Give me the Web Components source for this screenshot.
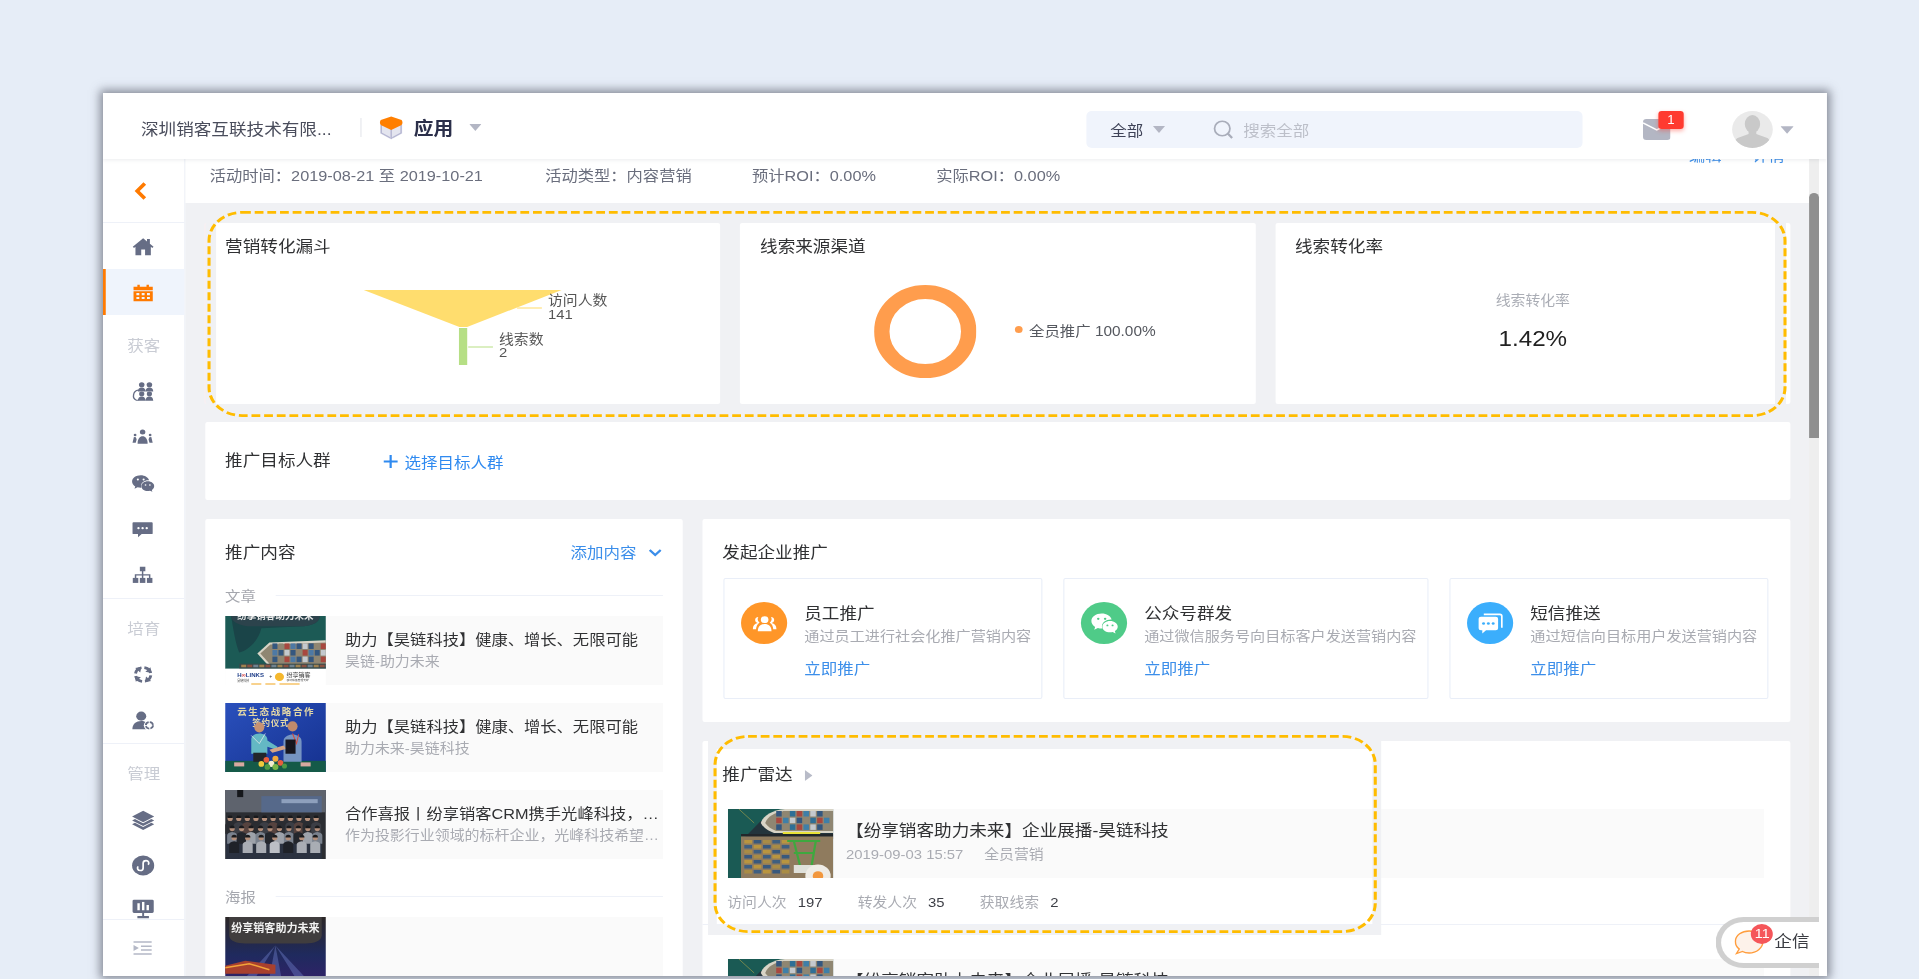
<!DOCTYPE html>
<html lang="zh">
<head>
<meta charset="utf-8">
<title>活动详情</title>
<style>
html, body { margin: 0; height: 979px; overflow: hidden; }
body {
    box-sizing: border-box;
    padding: 93px 0 0 103px;
    background: #e6edf7;
    font: 14px "Liberation Sans", "Noto Sans CJK SC", sans-serif;
    color: #303133;
}
</style>
</head>
<body>

<crm-window>
    <crm-header slot="header"></crm-header>
    <side-nav slot="nav"></side-nav>

    <sub-bar slot="main"></sub-bar>
    <div slot="main" style="flex:1;min-height:0;overflow:hidden;padding:20px 17px 0 18px;">
        <chart-row></chart-row>
        <target-card></target-card>
        <div style="display:grid;grid-template-columns:434px 989px;gap:18px;align-items:start;">
            <content-card></content-card>
            <div style="display:flex;flex-direction:column;gap:19px;">
                <launch-card></launch-card>
                <radar-card></radar-card>
            </div>
        </div>
    </div>

    <chat-widget slot="float"></chat-widget>
</crm-window>

<script>
const CYCLE_HEADS = [45, 135, 225, 315]
    .map((a) => `<path d="M11.500 .8l5.500 3.700-5.500 3.700z" transform="rotate(${a} 12 12)"/>`).join("");

const ICONS = {
    home: `<path d="M12 2.500 1.200 12.300l1.300 1.400L4 12.400V22h6v-6.500h4V22h6v-9.600l1.500 1.300 1.300-1.400L19 8.900V3.500h-3v2.700z"/>`,
    calendar: `<path d="M2 5.500h4V3h2.500v2.500h7V3H18v2.500h4V9.500H2z"/><path fill-rule="evenodd" d="M2 10.500h20V22H2zM5 12.500V15h3v-2.500zM10.500 12.500V15h3v-2.500zM16 12.500V15h3v-2.500zM5 17v2.500h3V17zM10.500 17v2.500h3V17zM16 17v2.500h3V17z"/>`,
    group: `<circle cx="10.500" cy="4.300" r="2.900"/><circle cx="18.500" cy="4.300" r="2.900"/><path d="M6.500 12c0-3 1.700-4.500 4-4.500s4 1.500 4 4.500zM14.500 12c0-3 1.700-4.500 4-4.500s4 1.500 4 4.500z"/><circle cx="10.500" cy="14.800" r="2.700"/><circle cx="18.500" cy="14.800" r="2.700"/><path d="M6.500 22.500c0-3 1.700-4.800 4-4.800s4 1.800 4 4.800zM14.500 22.500c0-3 1.700-4.800 4-4.800s4 1.800 4 4.800z"/><path d="M7 10.500C1.500 11 0 20 5 22h2" fill="none" stroke="currentColor" stroke-width="1.400"/>`,
    team: `<circle cx="12" cy="6" r="3"/><path d="M6.500 20c0-6 2.500-9 5.500-9s5.500 3 5.500 9z"/><circle cx="3.800" cy="9.500" r="1.500"/><circle cx="20.200" cy="9.500" r="1.500"/><path d="M1 19l1.500-7 2.200.3.800 2.700-1 4zM23 19l-1.500-7-2.200.3-.8 2.700 1 4z"/>`,
    wechat: `<path d="M9.500 2.500c-5 0-9 3.200-9 7.200 0 2.300 1.300 4.300 3.300 5.600L3 18l3.200-1.600c1 .3 2.100.5 3.300.5h.6c-.3-.7-.4-1.400-.4-2.100 0-3.700 3.500-6.600 7.800-6.600h.7C17.300 5 13.800 2.500 9.500 2.500z"/><path d="M23.500 15c0-3-3-5.500-6.700-5.500S10.100 12 10.100 15s3 5.500 6.700 5.500c.8 0 1.600-.1 2.300-.3l2.500 1.300-.6-2.200c1.500-1 2.500-2.600 2.500-4.300z"/><circle cx="6.500" cy="7.500" r="1.100" style="fill:var(--hole,#fff)"/><circle cx="12.500" cy="7.500" r="1.100" style="fill:var(--hole,#fff)"/><circle cx="14.500" cy="13.800" r=".9" style="fill:var(--hole,#fff)"/><circle cx="19" cy="13.800" r=".9" style="fill:var(--hole,#fff)"/>`,
    chat: `<path d="M2 4h20a1 1 0 0 1 1 1v12a1 1 0 0 1-1 1H11l-4 4v-4H2a1 1 0 0 1-1-1V5a1 1 0 0 1 1-1z"/><circle cx="7.500" cy="11" r="1.300" fill="#fff"/><circle cx="12" cy="11" r="1.300" fill="#fff"/><circle cx="16.500" cy="11" r="1.300" fill="#fff"/>`,
    org: `<path d="M9 2h6v5.500H9zM11.200 7h1.600v4h7.700v4.500h-1.600v-2.900h-6.100v2.900h-1.600v-2.900H5.100v2.900H3.500V11h7.700z"/><rect x="1.300" y="15.500" width="6" height="6"/><rect x="9" y="15.500" width="6" height="6"/><rect x="16.700" y="15.500" width="6" height="6"/>`,
    cycle: `<circle cx="12" cy="12" r="8" fill="none" stroke="currentColor" stroke-width="3" stroke-dasharray="9.400 3.170" stroke-dashoffset="-1.050"/>${CYCLE_HEADS}`,
    usercycle: `<circle cx="10" cy="7" r="5.200"/><path d="M.8 22c0-6 4-9.300 9.200-9.300 2 0 3.500.5 4.800 1.300V22z"/><circle cx="18.500" cy="17.500" r="5.800" fill="#fff"/><circle cx="18.500" cy="17.500" r="3.700" fill="none" stroke="currentColor" stroke-width="1.900" stroke-dasharray="4.600 1.200"/>`,
    layers: `<path d="M12 2 23.500 8.500 12 15 .5 8.500z"/><path d="M.5 13l3-1.700L12 16.200l8.500-4.900 3 1.700L12 19.500z"/><path d="M.5 17.500l3-1.700 8.500 4.900 8.500-4.900 3 1.700L12 24z"/>`,
    miniapp: `<circle cx="12" cy="12" r="11.500"/><path d="M6.800 13c-1.400 2-.5 4.800 2.200 4.800 2 0 3-1.500 3-3v-5.400c0-1.500 1-3 3-3 2.700 0 3.600 2.800 2.200 4.800" fill="none" stroke="#fff" stroke-width="1.800"/>`,
    monitor: `<path d="M2.500 2h19A1.500 1.500 0 0 1 23 3.500v12a1.500 1.500 0 0 1-1.500 1.500h-19A1.500 1.500 0 0 1 1 15.500v-12A1.500 1.500 0 0 1 2.500 2z"/><path d="M11 17h2v3.500h5V23H6v-2.500h5z"/><g fill="#fff"><rect x="6" y="6" width="2.500" height="8"/><rect x="10.800" y="4.500" width="2.500" height="9.500"/><rect x="15.500" y="8" width="2.500" height="6"/></g>`,
    indent: `<path d="M1 3h22v2H1zM10 8.500h13v2H10zM10 13.500h13v2H10zM1 19h22v2H1zM1 8l6.500 4L1 16z"/>`,
    users: `<circle cx="12" cy="8" r="3.600"/><path d="M5.500 20c0-5 2.700-7.500 6.500-7.500s6.500 2.500 6.500 7.500z"/><path d="M6 5.200a3.200 3.200 0 0 0-.6 6.300C2.500 12.300.8 14.300.8 18h3c.2-3 1.400-5.600 3.400-6.800A5 5 0 0 1 6 5.200zM18 5.200a3.200 3.200 0 0 1 .6 6.300c2.900.8 4.600 2.800 4.600 6.500h-3c-.2-3-1.400-5.600-3.400-6.800A5 5 0 0 0 18 5.200z"/>`,
    sms: `<path d="M6 2.500h14A2.500 2.500 0 0 1 22.500 5v11H21V5a1 1 0 0 0-1-1H6z"/><path d="M3.500 5.500h13A2 2 0 0 1 18.500 7.500v9a2 2 0 0 1-2 2H8l-3.300 3v-3H3.500a2 2 0 0 1-2-2v-9a2 2 0 0 1 2-2z"/><g style="fill:var(--hole,#fff)"><circle cx="5.800" cy="12" r="1.300"/><circle cx="10" cy="12" r="1.300"/><circle cx="14.200" cy="12" r="1.300"/></g>`
};

class UiIcon extends HTMLElement {
    connectedCallback() {
        const size = this.getAttribute("size") || 20;
        const name = this.getAttribute("name");
        this.attachShadow({ mode: "open" }).innerHTML = `
<style>:host { display: inline-flex; line-height: 0; } svg { fill: currentColor; }</style>
<svg width="${size}" height="${size}" viewBox="0 0 24 24">${ICONS[name]}</svg>`;
    }
}

function caret(color = "#b3b6c4", w = 11, h = 7) {
    return `<svg width="${w}" height="${h}" viewBox="0 0 11 7"><path d="M0 0h11L5.500 7z" fill="${color}"/></svg>`;
}

class CrmWindow extends HTMLElement {
    constructor() {
        super();
        this.attachShadow({ mode: "open" }).innerHTML = `
<style>
:host {
    display: block;
    width: 1724px;
    height: 883px;
    background: #fff;
    box-shadow: 0 0 9px 3px rgba(74, 78, 92, .62);
}
.stretch {
    position: relative;
    width: 1567.3px;
    height: 883px;
    overflow: hidden;
    display: flex;
    flex-direction: column;
    background: #fff;
    transform: scaleX(1.1);
    transform-origin: 0 0;
    filter: blur(.3px);
}
.body { flex: 1; min-height: 0; display: flex; }
.main { flex: 1; min-width: 0; display: flex; flex-direction: column; background: #f0f1f4; }
.rail { width: 9px; background: #eeeeee; flex: none; margin-right: 7.300px; position: relative; }
.thumb { width: 9px; height: 245px; margin-top: 34px; background: #8f8f8f; border-radius: 5px 5px 0 0; }
</style>
<div class="stretch">
    <slot name="header"></slot>
    <div class="body">
        <slot name="nav"></slot>
        <div class="main"><slot name="main"></slot></div>
        <div class="rail"><div class="thumb"></div></div>
    </div>
    <slot name="float"></slot>
</div>`;
    }
}

class CrmHeader extends HTMLElement {
    constructor() {
        super();
        this.attachShadow({ mode: "open" }).innerHTML = `
<style>
:host {
    display: flex;
    align-items: center;
    flex: none;
    height: 66px;
    box-sizing: border-box;
    padding-left: 34.500px;
    background: #fff;
    position: relative;
    z-index: 3;
    box-shadow: 0 1px 4px rgba(30, 40, 70, .09);
}
.company { width: 175px; font-size: 16px; color: #4a4d5c; white-space: nowrap; margin-top: 3px; }
.sep { width: 1px; height: 19px; background: #e4e6ec; margin: 3px 16px 0 24px; }
.box { margin-top: 3px; display: flex; }
.app { font-size: 18px; font-weight: bold; color: #2b2f4a; margin: 2px 14px 0 10px; }
.drop { display: flex; margin-top: 3px; }
.search { margin-left: 550.700px; margin-top: 7px; width: 451px; height: 37px; border-radius: 5px; background: #f0f4fc;
    display: flex; align-items: center; padding-left: 21.500px; box-sizing: border-box; }
.scope { font-size: 15px; color: #3f4358; margin-right: 8px; }
.glass { margin: 0 9px 0 43px; display: flex; }
.hint { font-size: 15px; color: #bcbfc9; }
.mail { position: relative; margin-left: 54.600px; width: 25px; height: 21px; margin-top: 7px; }
.badge { position: absolute; left: 14px; top: -8px; width: 23px; height: 18px; border-radius: 3px;
    background: #ff3b30; color: #fff; font-size: 12px; text-align: center; line-height: 18px;
    box-shadow: 0 2px 4px rgba(255, 59, 48, .4); }
.avatar { margin-left: 56px; margin-top: 7px; width: 37px; height: 37px; border-radius: 50%; background: #eaeaea; overflow: hidden; }
.tail { margin-left: 7.500px; margin-top: 7px; display: flex; }
</style>
<div class="company">深圳销客互联技术有限...</div>
<div class="sep"></div>
<div class="box"><svg width="22" height="24" viewBox="0 0 22 24">
    <path d="M1 7v10.500l10 6 10-6V7l-10 5z" fill="#e4e5ef"/>
    <path d="M2 9v8l8 4.800M20 9v8l-8 4.800M11 13v10" fill="none" stroke="#b5b6d2" stroke-width="1.300"/>
    <path d="M11 .5 20.500 4c1 1.500 1 3.500 0 5L11 14 1.500 9c-1-1.500-1-3.500 0-5z" fill="#ff7f00"/>
</svg></div>
<div class="app">应用</div>
<div class="drop">${caret()}</div>
<div class="search">
    <span class="scope">全部</span>
    <span style="display:flex">${caret("#b3b6c4", 12, 7)}</span>
    <span class="glass"><svg width="19" height="19" viewBox="0 0 19 19"><ellipse cx="8.500" cy="8.500" rx="7" ry="7.300" fill="none" stroke="#a9adba" stroke-width="1.600"/><path d="M13.500 13.500l4 4.500" stroke="#a9adba" stroke-width="2"/></svg></span>
    <span class="hint">搜索全部</span>
</div>
<div class="mail">
    <svg width="25" height="21" viewBox="0 0 25 21"><rect width="25" height="21" rx="3" fill="#b3b6c3"/><path d="M0 4l12.500 7L18 8" fill="none" stroke="#fff" stroke-width="1.500"/></svg>
    <div class="badge">1</div>
</div>
<div class="avatar"><svg width="37" height="37" viewBox="0 0 37 37"><ellipse cx="18.500" cy="13" rx="7" ry="9" fill="#c9c9c9"/><path d="M15 20v3l-10 4c-2 1-3 4-3 10h33c0-6-1-9-3-10l-10-4v-3z" fill="#c9c9c9"/></svg></div>
<div class="tail">${caret("#b3b6c4", 12, 8)}</div>`;
    }
}

class NavItem extends HTMLElement {
    constructor() {
        super();
        this.attachShadow({ mode: "open" }).innerHTML = `
<style>
:host { display: flex; align-items: center; justify-content: center; height: 46px; flex: none; color: #666d85; padding-right: 1.500px; }
:host([active]) { background: #eff4fc; color: #ff7a00; box-shadow: inset 2.500px 0 0 #ff7a00; }
</style>
<slot></slot>`;
    }
}

class NavLabel extends HTMLElement {
    constructor() {
        super();
        this.attachShadow({ mode: "open" }).innerHTML = `
<style>
:host { display: flex; align-items: center; justify-content: center; box-sizing: border-box; height: 53px;
    padding-top: 5px; flex: none; font-size: 15px; color: #c9ccd4; }
:host([line]) { border-top: 1px solid #eef1f8; }
</style>
<slot></slot>`;
    }
}

class SideNav extends HTMLElement {
    constructor() {
        super();
        this.attachShadow({ mode: "open" }).innerHTML = `
<style>
:host { display: flex; flex-direction: column; flex: none; width: 75px; box-sizing: border-box;
    border-right: 1px solid #e9edf6; background: #fff; height: 817px; }
.back { height: 63px; flex: none; border-bottom: 1px solid #eef1f8; display: flex; align-items: center; justify-content: center; padding-right: 7px; box-sizing: content-box; }
.scroll { flex: 1; min-height: 0; overflow: hidden; display: flex; flex-direction: column; }
.foot { height: 56px; flex: none; border-top: 1px solid #eef1f8; display: flex; align-items: center; justify-content: center; color: #b4b8c6; padding-right: 1.500px; }
</style>
<div class="back"><svg width="12" height="18" viewBox="0 0 12 18"><path d="M10 1.500 3 9l7 7.500" fill="none" stroke="#ff7a00" stroke-width="3.300"/></svg></div>
<div class="scroll">
    <nav-item><ui-icon name="home" size="21"></ui-icon></nav-item>
    <nav-item active><ui-icon name="calendar" size="21"></ui-icon></nav-item>
    <nav-label>获客</nav-label>
    <nav-item><ui-icon name="group" size="21"></ui-icon></nav-item>
    <nav-item><ui-icon name="team" size="20"></ui-icon></nav-item>
    <nav-item><ui-icon name="wechat" size="21"></ui-icon></nav-item>
    <nav-item><ui-icon name="chat" size="20"></ui-icon></nav-item>
    <nav-item><ui-icon name="org" size="20"></ui-icon></nav-item>
    <nav-label line>培育</nav-label>
    <nav-item><ui-icon name="cycle" size="21"></ui-icon></nav-item>
    <nav-item><ui-icon name="usercycle" size="21"></ui-icon></nav-item>
    <nav-label line>管理</nav-label>
    <nav-item><ui-icon name="layers" size="21"></ui-icon></nav-item>
    <nav-item><ui-icon name="miniapp" size="21"></ui-icon></nav-item>
    <nav-item style="margin-top:-3px"><ui-icon name="monitor" size="21"></ui-icon></nav-item>
</div>
<div class="foot"><ui-icon name="indent" size="18"></ui-icon></div>`;
    }
}

class SubBar extends HTMLElement {
    constructor() {
        super();
        this.attachShadow({ mode: "open" }).innerHTML = `
<style>
:host { display: flex; align-items: center; flex: none; height: 44px; box-sizing: border-box; overflow: hidden;
    padding: 0 22px 14px; background: #fff; font-size: 14.800px; color: #6a6e7d; white-space: nowrap; }
.links { margin-left: auto; align-self: flex-start; margin-top: -13px; display: flex; gap: 28px; color: #3d8ee8; line-height: 20px; }
</style>
<span style="width:305px">活动时间：2019-08-21 至 2019-10-21</span>
<span style="width:188px">活动类型：内容营销</span>
<span style="width:167.500px">预计ROI：0.00%</span>
<span>实际ROI：0.00%</span>
<span class="links"><span>编辑</span><span>详情</span></span>`;
    }
}

class DashFrame extends HTMLElement {
    constructor() {
        super();
        this.attachShadow({ mode: "open" }).innerHTML = `
<style>
:host { position: absolute; display: block; pointer-events: none; z-index: 2; }
svg { display: block; width: 100%; height: 100%; overflow: visible; }
rect { x: 1.400px; y: 1.400px; width: calc(100% - 2.800px); height: calc(100% - 2.800px); rx: 30px; ry: 28px;
    fill: none; stroke: #ffbc00; stroke-width: 2.800px; stroke-dasharray: 8 3.500; }
</style>
<svg><rect></rect></svg>`;
    }
}

const CARD_CSS = `
:host { display: block; background: #fff; border-radius: 2px; }
.title { font-size: 16px; line-height: 20px; color: #303133; }
`;

class ChartRow extends HTMLElement {
    constructor() {
        super();
        this.attachShadow({ mode: "open" }).innerHTML = `
<style>
:host { display: grid; grid-template-columns: repeat(3, 1fr); gap: 18px; height: 181px; position: relative; margin-bottom: 18px; }
.title { font-size: 16px; line-height: 20px; color: #303133; position: absolute; left: 18px; top: 14px; }
section { background: #fff; position: relative; border-radius: 2px; }
.funnel { border-left: 10px solid #f0f1f4; box-shadow: -1px 0 0 #f8f0f2; }
.funnel .title { left: 8px; }
.funnel svg { position: absolute; left: 0; top: 52px; }
.donut { display: flex; align-items: center; padding: 35px 0 0 122px; box-sizing: border-box; }
.legend { margin-left: 34.500px; margin-top: -3px; display: flex; align-items: center; gap: 4px; font-size: 14px; color: #55585f; }
.legend i { width: 7px; height: 7px; border-radius: 50%; background: #ff9d4d; margin-right: 2px; }
.sliver { background: #fff; padding-right: 4px; }
.rate { height: 100%; border-right: 10px solid #f0f1f4; box-sizing: border-box; position: relative;
    display: flex; flex-direction: column; align-items: center; padding: 68px 0 0 14px; }
.rate .label { font-size: 13.500px; color: #aaadb5; line-height: 20px; }
.rate .value { font-size: 22px; color: #222; margin-top: 15px; line-height: 26px; }
</style>
<section class="funnel">
    <div class="title">营销转化漏斗</div>
    <svg width="450" height="110" viewBox="0 0 450 110" font-size="13.500" fill="#555">
        <path d="M134 15H314L228 52H221z" fill="#ffdd6e"/>
        <rect x="220.600" y="53" width="7.500" height="37" fill="#b6df85"/>
        <path d="M273.400 33H296" stroke="#ffe79a" stroke-width="1.500"/>
        <path d="M229 72H251.500" stroke="#cfeaad" stroke-width="1.500"/>
        <text x="301.500" y="30.500">访问人数</text><text x="301.500" y="44.500">141</text>
        <text x="257" y="69">线索数</text><text x="257" y="82.500">2</text>
    </svg>
</section>
<section class="donut">
    <div class="title">线索来源渠道</div>
    <svg width="93" height="93" viewBox="0 0 93 93"><circle cx="46.500" cy="46.500" r="39.500" fill="none" stroke="#ff9d4d" stroke-width="14"/></svg>
    <div class="legend"><i></i><span>全员推广 100.00%</span></div>
</section>
<section class="sliver">
    <div class="rate">
        <div class="title">线索转化率</div>
        <div class="label">线索转化率</div>
        <div class="value">1.42%</div>
    </div>
</section>
<dash-frame style="left:2px;right:3.500px;top:-12px;bottom:-13px"></dash-frame>`;
    }
}

class TargetCard extends HTMLElement {
    constructor() {
        super();
        this.attachShadow({ mode: "open" }).innerHTML = `
<style>
${CARD_CSS}
:host { display: flex; align-items: center; height: 78px; padding-left: 18px; margin-bottom: 19px; box-sizing: border-box; }
.add { margin-left: 48px; display: flex; align-items: center; gap: 6px; color: #2f8af0; font-size: 15px; }
</style>
<span class="title">推广目标人群</span>
<span class="add"><svg width="13" height="13" viewBox="0 0 13 13"><path d="M6.500 0v13M0 6.500h13" stroke="#2f8af0" stroke-width="2"/></svg>选择目标人群</span>`;
    }
}

function containers(x0, y0, cols, rows, w, h, gap, palette) {
    let out = "";
    for (let r = 0; r < rows; r++) {
        for (let c = 0; c < cols; c++) {
            const color = palette[(r * 3 + c * 5) % palette.length];
            out += `<rect x="${x0 + c * (w + gap)}" y="${y0 + r * (h + gap)}" width="${w}" height="${h}" fill="${color}"/>`;
        }
    }
    return out;
}

// rows of people from back to front; the front row wears lighter shirts
function crowd() {
    let out = "";
    const rows = [
        [28, 11, ["#2a2c31", "#3c3e45", "#56433f"]],
        [38, 10, ["#79818d", "#23262c", "#9da2aa"]],
        [47, 7, ["#1f2228", "#a9adb4", "#a9adb4", "#bcbfc5"]]
    ];
    rows.forEach(([y, count, shirts], r) => {
        for (let i = 0; i < count; i++) {
            const x = 5 + r * 2 + i * (94 / count);
            const shirt = shirts[i % shirts.length];
            out += `<rect x="${x - 4.500}" y="${y + 14}" width="9" height="${54 - y}" fill="#2b3240"/><path d="M${x - 5} ${y + 15}V${y + 7}q0-3 5-3.500q5 .5 5 3.500V${y + 15}z" fill="${shirt}"/><circle cx="${x}" cy="${y}" r="2.600" fill="#b58f7a"/><path d="M${x - 2.700} ${y - .3}a2.700 2.700 0 0 1 5.400 0z" fill="#191a1d"/>`;
        }
    });
    return out;
}

const THUMBS = {
    port: `
<rect width="100" height="52" fill="#1c5a55"/>
<path d="M6 0H94C94 6 88 9 78 10L36 12C34 22 24 34 14 36 10 26 8 12 6 0z" fill="#1a4448"/>
<path d="M6 0H94C94 6 88 9 78 10H22C14 9 6 6 6 0z" fill="#2c434c"/>
<text x="50" y="3" text-anchor="middle" font-size="9.500" font-weight="bold" fill="#e9e9e9">纷享销客助力未来</text>
<path d="M32 37 44 26 100 24V50H44z" fill="#d8d4c6"/>
<path d="M35 37 45 28 100 26V48H45z" fill="#8f8672"/>
${containers(47, 27, 9, 3, 5, 5.500, 1, ["#34577f", "#c4c9ce", "#34577f", "#4d79a5", "#a8483f", "#8f8672"])}
<rect x="14" y="47" width="86" height="5" fill="#374a4c"/>
${containers(16, 48, 14, 1, 5, 2.500, 1, ["#9f8250", "#70828e", "#8a5140"])}
<rect y="52" width="100" height="16" fill="#fff"/>
<text x="12" y="60" font-size="6" font-weight="bold" fill="#21408a">H<tspan fill="#d33c3c">∞</tspan>LINKS</text>
<text x="12" y="65" font-size="3" fill="#444">昊链科技</text>
<text x="44" y="61" font-size="5" fill="#333">+</text>
<ellipse cx="54" cy="60" rx="4.500" ry="4" fill="#f5b82e"/>
<text x="61" y="60" font-size="6" fill="#333">纷享销客</text>
<text x="61" y="64.500" font-size="2.800" fill="#555">移动销售管理专家</text>
<path d="M26 67h10M40 67h10M54 67h20" stroke="#f2a61e" stroke-width="1"/>`,
    sign: `
<defs><linearGradient id="sg" x1="0" y1="0" x2="1" y2="1"><stop offset="0" stop-color="#2a50bc"/><stop offset="1" stop-color="#15318f"/></linearGradient></defs>
<rect width="100" height="68" fill="url(#sg)"/>
<text x="50" y="12" text-anchor="middle" font-size="9.500" font-weight="bold" fill="#e4d8a6" textLength="76">云生态战略合作</text>
<text x="45" y="23" text-anchor="middle" font-size="8.500" font-weight="bold" fill="#e4d8a6" textLength="36">签约仪式</text>
<rect y="57" width="100" height="11" fill="#155a48"/>
<path d="M26 50V36c0-4 4-6 8-6s8 2 8 6v1l10 6-1 3-9-3v7z" fill="#64b8c4"/>
<rect x="28" y="49" width="13" height="9" fill="#23262c"/>
<circle cx="34" cy="24" r="5" fill="#c79272"/>
<path d="M26 32 34 40 40 30" fill="none" stroke="#eee" stroke-width=".7"/>
<path d="M58 58V38c0-5 5-7 9-7s9 2 9 7v20z" fill="#7594c2"/>
<circle cx="67" cy="23" r="5" fill="#c08a6c"/>
<path d="M67 30 71 40 73 31" fill="none" stroke="#d94a3a" stroke-width="1"/>
<path d="M44 46l14-4 3 3-14 4z" fill="#d5a486"/>
<rect x="60" y="36" width="10" height="14" fill="#16161f"/>
<circle cx="36" cy="60" r="2.800" fill="#f0c93c"/><circle cx="41" cy="56" r="2.800" fill="#e95d3d"/><circle cx="46" cy="60" r="3" fill="#f4ecd0"/><circle cx="50" cy="55" r="3" fill="#f2a93c"/><circle cx="55" cy="59" r="2.800" fill="#e95d3d"/><circle cx="59" cy="62" r="2.500" fill="#4f9a44"/><circle cx="42" cy="63" r="2.800" fill="#4f9a44"/><circle cx="50" cy="63" r="3" fill="#7ab648"/>
<rect x="9" y="58.500" width="10" height="4" fill="#d8a9a0"/><rect x="75" y="58.500" width="10" height="4" fill="#d8a9a0"/>`,
    crowd: `
<rect width="100" height="68" fill="#2b2d32"/>
<rect width="100" height="22" fill="#5e636d"/>
<rect x="36" y="6" width="60" height="16" fill="#56698a"/>
<rect x="12" y="0" width="6" height="7" fill="#15171b"/>
<rect x="56" y="9" width="36" height="4" fill="#8ea0bd"/>
${crowd()}`,
    night: `
<defs><linearGradient id="ng" x1="0" y1="0" x2="0" y2="1"><stop offset="0" stop-color="#2b2626"/><stop offset=".55" stop-color="#1f2a5e"/><stop offset="1" stop-color="#34206a"/></linearGradient></defs>
<rect width="100" height="68" fill="url(#ng)"/>
<path d="M4 0H96V18C96 24 88 26 80 26H20C12 26 4 24 4 18z" fill="#403d3e"/>
<text x="50" y="15" text-anchor="middle" font-size="11" font-weight="bold" fill="#f2f2f2">纷享销客助力未来</text>
<path d="M50 28 20 60H30zM50 28 44 60H56zM50 28 70 60H80z" fill="#6a79c4" opacity=".45"/>
<path d="M0 48 20 43 50 47 50 56H0z" fill="#a8402e"/>
<path d="M0 50 24 46 44 52" fill="none" stroke="#f2a33a" stroke-width="1.500"/>`,
    aerial: `
<rect width="96" height="69" fill="#1a5a54"/>
<path d="M10 0 24 14" stroke="#c4b04a" stroke-width=".5"/>
<path d="M14 30 30 12 96 0V30z" fill="#23343c"/>
<path d="M30 14C32 7 40 1 52 0H96V24H42C36 22 32 18 30 14z" fill="#d8d4c6"/>
<path d="M34 14C36 8 42 3 52 2H96V22H44C39 20 36 17 34 14z" fill="#8f8672"/>
${containers(44, 2, 8, 3, 5, 5.500, 1.200, ["#34577f", "#c4c9ce", "#3f7fa8", "#a8483f", "#2f6f96", "#8f8672"])}
<rect x="12" y="25" width="84" height="2.500" fill="#22272b"/>
<path d="M12 27.500H96V69H12z" fill="#8f7b5e"/>
${containers(15, 31, 5, 7, 7, 3.500, 1.500, ["#b9953f", "#39597d", "#a98c45", "#3f5f80"])}
<path d="M50 24H84" stroke="#e8e038" stroke-width="2"/>
<path d="M54 32H84M60 32 66 58M80 32 76 58M60 44H78" stroke="#3fa83f" stroke-width="2" fill="none"/>
<rect x="60" y="56" width="22" height="8" fill="#dfe0da"/>
<circle cx="82" cy="67" r="11.500" fill="#efece6"/>
<circle cx="82" cy="67" r="4.800" fill="#f2973d"/>`
};

class ArtThumb extends HTMLElement {
    constructor() { super(); this.attachShadow({ mode: "open" }); }
    connectedCallback() {
        const w = this.getAttribute("width") || 91.500;
        const vb = this.getAttribute("kind") === "aerial" ? "0 0 96 69" : "0 0 100 68";
        this.shadowRoot.innerHTML = `
<style>:host { display: block; flex: none; line-height: 0; width: ${w}px; height: 69px; overflow: hidden; }</style>
<svg width="${w}" height="69" viewBox="${vb}" preserveAspectRatio="none">${THUMBS[this.getAttribute("kind")]}</svg>`;
    }
}

class ContentItem extends HTMLElement {
    constructor() {
        super();
        this.attachShadow({ mode: "open" }).innerHTML = `
<style>
:host { display: flex; height: 69px; margin-bottom: 18px; background: #fafafa; }
.text { flex: 1; min-width: 0; padding: 13px 0 0 17.500px; }
.t, .s { white-space: nowrap; overflow: hidden; text-overflow: ellipsis; line-height: 22px; }
.t { font-size: 14.800px; color: #303133; }
.s { font-size: 13.600px; color: #a9abb2; }
</style>
<slot name="thumb"></slot>
<div class="text"><div class="t"><slot name="title"></slot></div><div class="s"><slot name="sub"></slot></div></div>`;
    }
}

class SectionRule extends HTMLElement {
    constructor() {
        super();
        this.attachShadow({ mode: "open" }).innerHTML = `
<style>
:host { display: flex; align-items: center; gap: 18px; height: 20px; font-size: 14px; color: #a5a7ae; margin-bottom: 11px; }
i { flex: 1; height: 1px; background: #eef1f8; }
</style>
<slot></slot><i></i>`;
    }
}

class ContentCard extends HTMLElement {
    constructor() {
        super();
        this.attachShadow({ mode: "open" }).innerHTML = `
<style>
${CARD_CSS}
:host { padding: 24px 18px 0; height: 520px; box-sizing: border-box; }
.head { display: flex; align-items: center; margin-bottom: 22px; }
.add { margin-left: auto; display: flex; align-items: center; gap: 11px; font-size: 15px; color: #3b8eea; line-height: 20px; }
.add svg { margin-right: 1px; }
</style>
<div class="head">
    <span class="title">推广内容</span>
    <span class="add">添加内容<svg width="12" height="8" viewBox="0 0 12 8"><path d="M1 1l5 5 5-5" fill="none" stroke="#3b8eea" stroke-width="2.200"/></svg></span>
</div>
<section-rule>文章</section-rule>
<content-item>
    <art-thumb slot="thumb" kind="port"></art-thumb>
    <span slot="title">助力【昊链科技】健康、增长、无限可能</span>
    <span slot="sub">昊链-助力未来</span>
</content-item>
<content-item>
    <art-thumb slot="thumb" kind="sign"></art-thumb>
    <span slot="title">助力【昊链科技】健康、增长、无限可能</span>
    <span slot="sub">助力未来-昊链科技</span>
</content-item>
<content-item>
    <art-thumb slot="thumb" kind="crowd"></art-thumb>
    <span slot="title">合作喜报丨纷享销客CRM携手光峰科技，助力智慧显示新未来</span>
    <span slot="sub">作为投影行业领域的标杆企业，光峰科技希望借助数字化升级营销</span>
</content-item>
<section-rule style="margin-top:27px">海报</section-rule>
<content-item style="position:relative">
    <art-thumb slot="thumb" kind="night"></art-thumb>
    <span slot="title" style="position:relative;top:22px">助力未来丨昊链携手纷享销客，助力未来</span>
</content-item>`;
    }
}

class PromoTile extends HTMLElement {
    constructor() { super(); this.attachShadow({ mode: "open" }); }
    connectedCallback() {
        const bg = this.getAttribute("tint");
        this.shadowRoot.innerHTML = `
<style>
:host { display: flex; box-sizing: border-box; height: 121px; border: 1px solid #e9eef8; border-radius: 2px; padding: 23px 0 0 15px; --hole: ${bg}; }
.dot { width: 42px; height: 42px; border-radius: 50%; background: ${bg}; color: #fff; flex: none;
    display: flex; align-items: center; justify-content: center; margin-right: 15.500px; }
.t { font-size: 16px; line-height: 20px; color: #303133; margin-top: 2px; }
.d { font-size: 13.750px; line-height: 20px; color: #a9abb2; margin-top: 3px; white-space: nowrap; }
.a { font-size: 15px; line-height: 20px; color: #3b8eea; margin-top: 12px; }
</style>
<div class="dot"><ui-icon name="${this.getAttribute("icon")}" size="${this.getAttribute("size") || 24}"></ui-icon></div>
<div>
    <div class="t">${this.getAttribute("heading")}</div>
    <div class="d">${this.getAttribute("desc")}</div>
    <div class="a">立即推广</div>
</div>`;
    }
}

class LaunchCard extends HTMLElement {
    constructor() {
        super();
        this.attachShadow({ mode: "open" }).innerHTML = `
<style>
${CARD_CSS}
:host { padding: 24px 19px 23px 19px; }
.title { margin-left: -1px; }
.grid { display: grid; grid-template-columns: 290px 332px 290px; gap: 19px; margin-top: 15px; }
</style>
<div class="title">发起企业推广</div>
<div class="grid">
    <promo-tile tint="#ff9628" icon="users" size="23" heading="员工推广" desc="通过员工进行社会化推广营销内容"></promo-tile>
    <promo-tile tint="#4fcb88" icon="wechat" size="25" heading="公众号群发" desc="通过微信服务号向目标客户发送营销内容"></promo-tile>
    <promo-tile tint="#3baefc" icon="sms" size="25" heading="短信推送" desc="通过短信向目标用户发送营销内容"></promo-tile>
</div>`;
    }
}

class RadarRow extends HTMLElement {
    constructor() { super(); this.attachShadow({ mode: "open" }); }
    connectedCallback() {
        this.shadowRoot.innerHTML = `
<style>
:host { display: block; padding: 0 24px 11px 22.500px; border-bottom: 1px solid #eef1f8; margin-bottom: 34px; }
.item { display: flex; height: 69px; background: #fafafa; }
.text { padding: 11px 0 0 12px; }
.t { font-size: 16px; line-height: 22px; color: #303133; }
.m { font-size: 13.500px; line-height: 20px; margin-top: 3px; color: #a9abb2; display: flex; gap: 19px; }
.stats { display: flex; font-size: 13.500px; line-height: 20px; color: #a9abb2; margin-top: 15px; }
.stats b { font-weight: normal; color: #3c3e45; margin: 0 32px 0 10px; }
</style>
<div class="item">
    <art-thumb kind="aerial" width="96"></art-thumb>
    <div class="text">
        <div class="t">【纷享销客助力未来】企业展播-昊链科技</div>
        <div class="m"><span>2019-09-03 15:57</span><span>全员营销</span></div>
    </div>
</div>
<div class="stats">访问人次<b>197</b>转发人次<b>35</b>获取线索<b>2</b></div>`;
    }
}

class RadarCard extends HTMLElement {
    constructor() {
        super();
        this.attachShadow({ mode: "open" }).innerHTML = `
<style>
${CARD_CSS}
:host { position: relative; padding-top: 24px; height: 300px; }
.head { display: flex; align-items: center; gap: 11px; padding-left: 18px; margin-bottom: 24px; }
.patch { position: absolute; left: 5px; top: 0; width: 612px; height: 194px; box-sizing: border-box;
    border: solid #f0f1f4; border-width: 8px 8.400px 10px 8px; z-index: 1; }
</style>
<div class="head">
    <span class="title">推广雷达</span>
    <svg width="7" height="11" viewBox="0 0 7 11"><path d="M0 0l7 5.500L0 11z" fill="#b8bbc8"/></svg>
</div>
<radar-row></radar-row>
<radar-row></radar-row>
<div class="patch"></div>
<dash-frame style="left:9.500px;top:-6px;width:603px;height:198px"></dash-frame>`;
    }
}

class ChatWidget extends HTMLElement {
    constructor() {
        super();
        this.attachShadow({ mode: "open" }).innerHTML = `
<style>
:host { position: absolute; right: 7.300px; top: 824px; width: 93.600px; height: 51px; box-sizing: border-box; z-index: 4;
    background: #fff; border: 5px solid rgba(190, 190, 190, .72); border-right: 0; border-radius: 26px 0 0 26px; }
.bubble { position: absolute; left: 12px; top: 8px; }
.count { position: absolute; left: 27px; top: 2px; width: 20px; height: 20px; border-radius: 50%; background: #f5565a;
    color: #fff; font-size: 13px; line-height: 20px; text-align: center; }
.name { position: absolute; left: 48px; top: 10px; font-size: 16px; line-height: 20px; color: #3a3c42; }
</style>
<svg class="bubble" width="27" height="25" viewBox="0 0 27 25"><path d="M13.500 1C20 1 26 5 26 11.500S20 23 13.500 23c-2.500 0-4.500-.5-6-1.500L2 23.500l2.500-4.500C2 17 1 14.500 1 11.500 1 5 7 1 13.500 1z" fill="#fdf2ea" stroke="#ff9d3d" stroke-width="1.300"/></svg>
<div class="count">11</div>
<div class="name">企信</div>`;
    }
}

customElements.define("ui-icon", UiIcon);
customElements.define("crm-window", CrmWindow);
customElements.define("crm-header", CrmHeader);
customElements.define("nav-item", NavItem);
customElements.define("nav-label", NavLabel);
customElements.define("side-nav", SideNav);
customElements.define("sub-bar", SubBar);
customElements.define("dash-frame", DashFrame);
customElements.define("chart-row", ChartRow);
customElements.define("target-card", TargetCard);
customElements.define("art-thumb", ArtThumb);
customElements.define("content-item", ContentItem);
customElements.define("section-rule", SectionRule);
customElements.define("content-card", ContentCard);
customElements.define("promo-tile", PromoTile);
customElements.define("launch-card", LaunchCard);
customElements.define("radar-row", RadarRow);
customElements.define("radar-card", RadarCard);
customElements.define("chat-widget", ChatWidget);
</script>
</body>
</html>
